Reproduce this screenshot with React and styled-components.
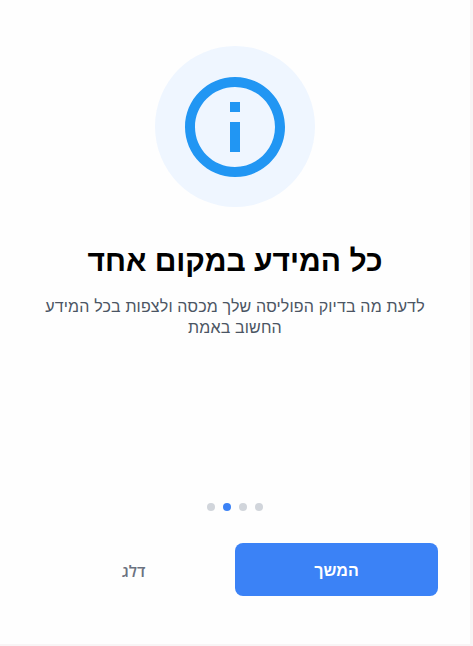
import React from "react";
import styled, { createGlobalStyle } from "styled-components";

const GlobalStyle = createGlobalStyle`
  *, *::before, *::after { box-sizing: border-box; }
  body {
    margin: 0;
    background: #f8f4f5;
    font-family: "Liberation Sans", Arial, sans-serif;
  }
`;

const Card = styled.main`
  display: flex;
  flex-direction: column;
  align-items: center;
  width: 470px;
  height: 644px;
  padding: 46px 32px 48px;
  background: #fefefe;
`;

const IconCircle = styled.div`
  display: flex;
  flex: none;
  align-items: center;
  justify-content: center;
  width: 160px;
  height: 161px;
  border-radius: 50%;
  background: #eff6ff;
`;

const Title = styled.h1`
  margin: 34px 0 0;
  font-size: 30px;
  line-height: 40px;
  font-weight: 700;
  white-space: nowrap;
  color: #000;
`;

const Description = styled.p`
  width: 390px;
  margin: 15px 0 0;
  font-size: 16px;
  line-height: 21px;
  letter-spacing: 0.17px;
  text-align: center;
  color: #4b5563;
`;

const Dots = styled.div`
  display: flex;
  gap: 8px;
  margin: auto 0 32px;
`;

const Dot = styled.span`
  width: 8px;
  height: 8px;
  border-radius: 50%;
  background: ${(p) => (p.$active ? "#3b82f6" : "#d1d5db")};
`;

const Actions = styled.div`
  display: flex;
  width: 406px;
`;

const Button = styled.button`
  flex: 1;
  height: 53px;
  padding: 2px 0 0;
  border: 0;
  border-radius: 8px;
  font-family: ${(p) => (p.$primary ? '"Liberation Sans"' : '"Open Sans"')}, sans-serif;
  font-size: 16px;
  font-weight: ${(p) => (p.$primary ? 700 : 600)};
  color: ${(p) => (p.$primary ? "#fff" : "#6b7280")};
  background: ${(p) => (p.$primary ? "#3b82f6" : "transparent")};
`;

const InfoIcon = () => (
  <svg width="120" height="120" viewBox="0 0 24 24" fill="#2196f3" aria-hidden="true">
    <path d="M11 7h2v2h-2zm0 4h2v6h-2zm1-9C6.48 2 2 6.48 2 12s4.48 10 10 10 10-4.48 10-10S17.52 2 12 2zm0 18c-4.41 0-8-3.59-8-8s3.59-8 8-8 8 3.59 8 8-3.59 8-8 8z" />
  </svg>
);

export default function App() {
  return (
    <>
      <GlobalStyle />
      <Card dir="rtl" lang="he">
        <IconCircle>
          <InfoIcon />
        </IconCircle>
        <Title>כל המידע במקום אחד</Title>
        <Description>
          לדעת מה בדיוק הפוליסה שלך מכסה ולצפות בכל המידע החשוב באמת
        </Description>
        <Dots>
          {[0, 1, 2, 3].map((step) => (
            <Dot key={step} $active={step === 2} />
          ))}
        </Dots>
        <Actions>
          <Button $primary>המשך</Button>
          <Button>דלג</Button>
        </Actions>
      </Card>
    </>
  );
}
